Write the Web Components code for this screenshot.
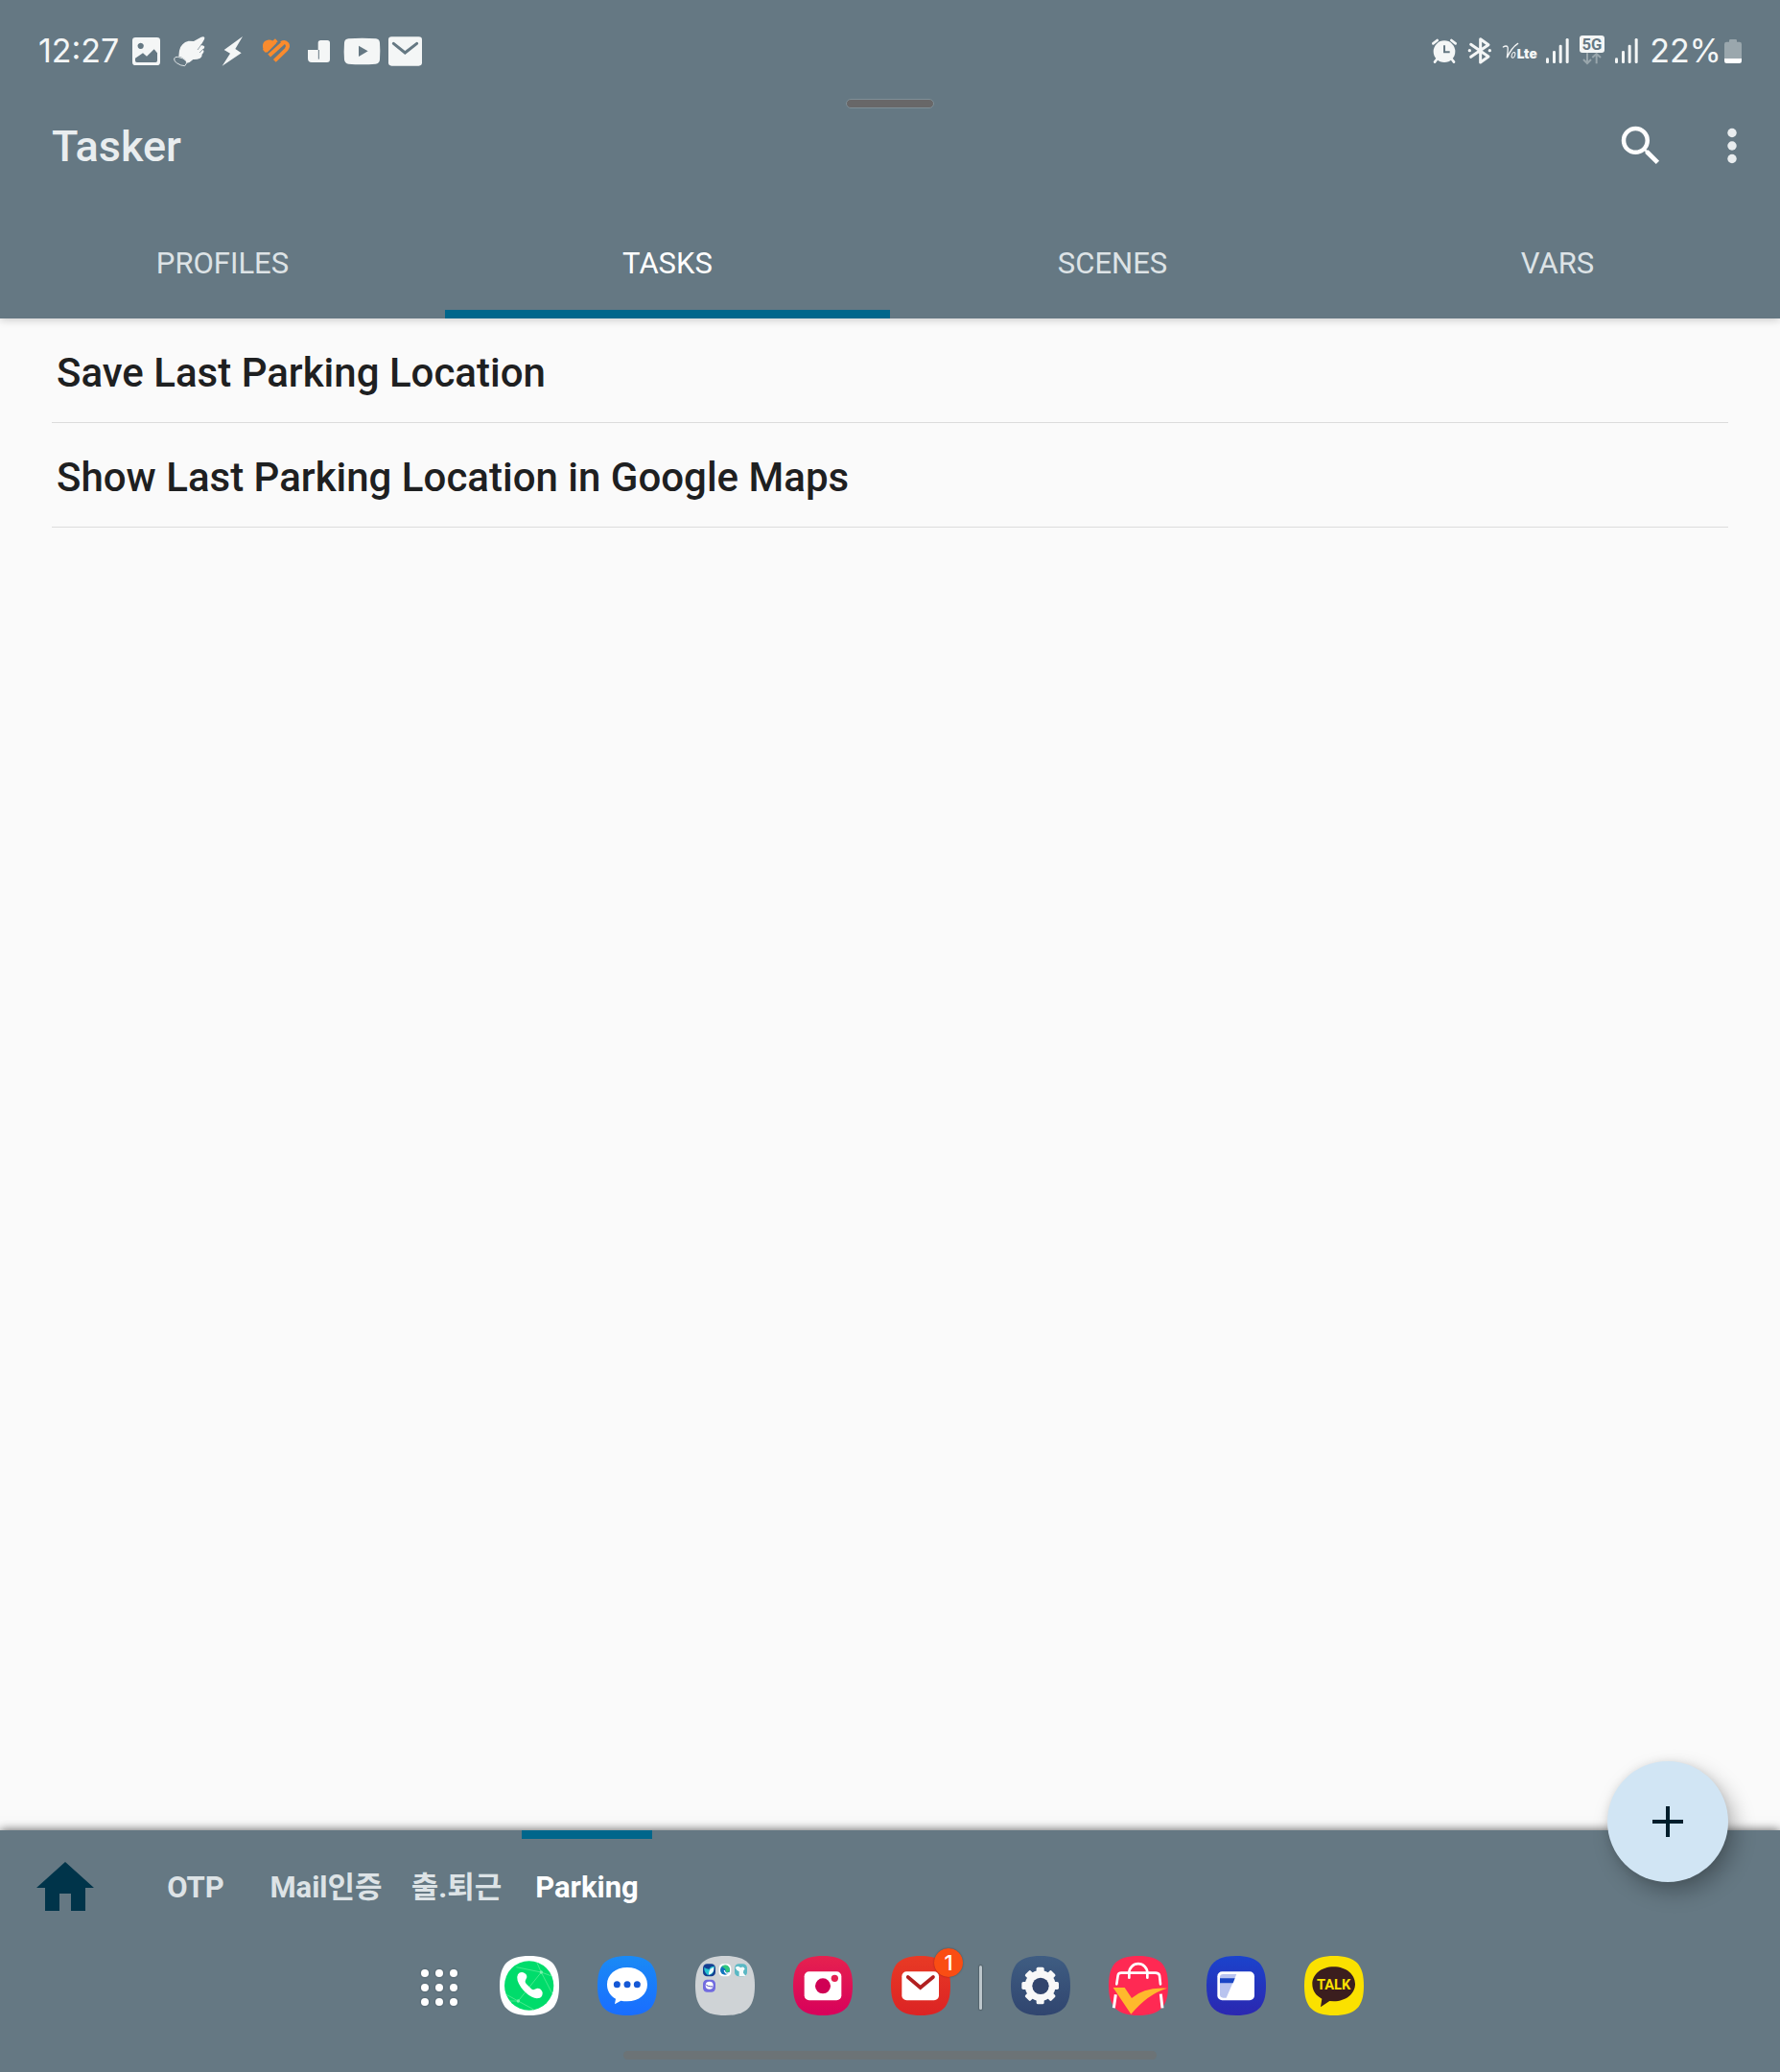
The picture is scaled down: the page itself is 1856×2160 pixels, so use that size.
<!DOCTYPE html>
<html lang="ko">
<head>
<meta charset="utf-8">
<title>Tasker</title>
<style>
html, body { margin: 0; height: 100%; }
body { font-family: Roboto, "Noto Sans CJK KR", sans-serif; background: #fafafa; color: #1e2021; }
</style>
</head>
<body>
<tasker-app></tasker-app>
<script>
const define = (name, html, setup) => customElements.define(name, class extends HTMLElement {
  connectedCallback() {
    if (this.shadowRoot) return;
    const t = document.createElement('template');
    t.innerHTML = html;
    this.attachShadow({ mode: 'open' }).append(t.content.cloneNode(true));
    if (setup) setup(this, this.shadowRoot);
  }
});

const RESET = `button{font:inherit;color:inherit;background:none;border:0;margin:0;padding:0;cursor:pointer}svg{display:block}*{box-sizing:border-box}`;

/* Status bar glyphs: [viewBox x, width, drawing], three units to a pixel */
const NOTICES = {
  image: [330, 135, `<path fill-rule="evenodd" fill="#f4f6f6" d="M364 57h67q10 0 10 10v67q0 10-10 10h-67q-10 0-10-10V67q0-10 10-10zM380 74a9.500 9.500 0 1 0 .1 0zM363 122v8q0 5 5 5h59q5 0 5-5v-24l-10-12-23 22-12-10z"/>`],
  finger: [465, 135, `<path fill="#f4f6f6" d="M499 116 501 98Q502 88 511 79 518 70 530 68L546 69 569 56Q578 52 580 58 581 63 574 72L568 82Q577 80 580 86 580 91 574 96 580 99 576 105L572 110Q573 118 566 122 556 127 544 126 534 136 525 137 519 120 499 116z"/><path fill="none" stroke="#f4f6f6" stroke-width="2.500" d="M496 118q-9-1-11 5-2 8 8 14 12 9 25 9 6-6 6-14-9-11-28-14z"/><path stroke="#657883" stroke-width="2" fill="none" d="M571 78 558 96M577 92l-13 13"/>`],
  bolt: [600, 135, `<path fill="#f4f6f6" d="M699 54 641 96 660 107 635 146 695 106 676 93z"/>`],
  heart: [735, 135, `<g fill="none" stroke="#fa8b2d" stroke-width="12"><path d="M782 114 826 74"/><path d="M766 100 805 65"/><path d="M799 130 836 94Q843 85 838 77 831 68 820 75"/></g><path fill="#fa8b2d" d="M764 96Q758 79 768 69 780 60 794 68L804 76 776 104 770 103z"/><path stroke="#657883" stroke-width="3" d="M771 110 808 77M789 124 824 92"/>`],
  jay: [870, 135, `<path fill="#f4f6f6" d="M903 96h32V74q0-8 8-8h21q8 0 8 8v52q0 9-9 9h-48q-12 0-12-12z"/><path stroke="#657883" stroke-width="3" d="M937 96v29"/>`],
  video: [1005, 135, `<path fill="#f4f6f6" d="M1030 61Q1073 57 1116 61 1127 62 1128 74 1130 100 1128 126 1127 139 1115 140 1072 143 1030 140 1019 139 1017 127 1015 100 1017 74 1018 62 1030 61z"/><path fill="#657883" d="M1062 83v34l29-17z"/>`],
  mail: [1140, 135, `<rect x="1155" y="55" width="105" height="91" rx="10" fill="#f4f6f6"/><path d="M1171 76 1207 105 1244 76" fill="none" stroke="#657883" stroke-width="9" stroke-linecap="round"/>`]
};
const bars = x => [[0, 121, 17], [21, 99, 39], [41, 80, 58], [62, 60, 78]].map(b => `<rect x="${x + b[0]}" y="${b[1]}" width="9" height="${b[2]}" rx="4" fill="#f4f6f6"/>`).join('');
const SYSTEM = {
  alarm: [48, 114, `<g fill="none" stroke="#f4f6f6" stroke-width="8" stroke-linecap="round"><path d="M73 76 86 66M143 76 130 66M84 126 78 134M132 126 138 134"/></g><circle cx="108" cy="101" r="34" fill="#f4f6f6"/><path d="M108 82v21h17" fill="none" stroke="#657883" stroke-width="6"/>`],
  bluetooth: [162, 114, `<g fill="none" stroke="#f4f6f6" stroke-width="9" stroke-linejoin="round" stroke-linecap="round"><path d="M191 79 246 117 221 135V62L246 80 191 118"/></g><circle cx="187" cy="98" r="5" fill="#f4f6f6"/><circle cx="250" cy="98" r="5" fill="#f4f6f6"/>`],
  volte: [276, 138, `<path fill="none" stroke="#f4f6f6" stroke-width="4" stroke-linecap="round" d="M292 87q10-6 14 0 2 4-2 34 14-32 34-45"/><ellipse cx="324" cy="112" rx="5" ry="9" transform="rotate(18 324 112)" fill="none" stroke="#f4f6f6" stroke-width="3"/><text x="335" y="123" font-family="Inter,sans-serif" font-size="41" font-weight="900" fill="#f4f6f6">Lte</text>`],
  signal1: [414, 99, bars(426)],
  fiveg: [513, 111, `<rect x="531" y="51" width="78" height="54" rx="9" fill="#f4f6f6"/><text x="570" y="96" text-anchor="middle" font-family="Roboto,sans-serif" font-size="50" font-weight="700" fill="#657883">5G</text><path d="M555 106v31M543 126l12 12 12-12M584 139v-31M571 120l13-12 13 12" fill="none" stroke="#99a6ac" stroke-width="6"/>`],
  signal2: [624, 111, bars(642)],
  battery: [975, 75, `<path fill="#9aa7ad" d="M999 67q0-4 4-4h16q4 0 4 4v4h8q7 0 7 7v46h-54V78q0-7 7-7h8z"/><path fill="#fff" d="M984 123h54v8q0 7-7 7h-40q-7 0-7-7z"/>`]
};
define('status-icon', `<style>:host{display:block;flex:none}svg{display:block}</style>`, (el, root) => {
  const [x, w, art] = NOTICES[el.getAttribute('name')] || SYSTEM[el.getAttribute('name')];
  root.append(document.createRange().createContextualFragment(
    `<svg width="${w / 3}" height="34" viewBox="${x} 48 ${w} 102" aria-hidden="true">${art}</svg>`));
});

define('status-bar', `<style>${RESET}
:host{display:flex;justify-content:space-between;align-items:center;height:88px;padding:18px 36px 0 40px;box-sizing:border-box;font:400 34px/36px Inter,sans-serif;color:#f4f6f6}
div{display:flex;align-items:center}
.clock{width:90px}
.level{padding-left:5px}
</style>
<div><span class="clock">12:27</span>${Object.keys(NOTICES).map(n => `<status-icon name="${n}"></status-icon>`).join('')}</div>
<div>${Object.keys(SYSTEM).slice(0, -1).map(n => `<status-icon name="${n}"></status-icon>`).join('')}<span class="level">22%</span><status-icon name="battery"></status-icon></div>`);

define('app-toolbar', `<style>${RESET}
:host{display:flex;align-items:center;justify-content:space-between;height:127px;padding:0 23px 0 54px;box-sizing:border-box}
h1{margin:0;padding-top:3px;font-size:45px;line-height:54px;font-weight:500;color:#e9edef}
div{display:flex;gap:41px}
</style>
<h1><slot></slot></h1>
<div>
<button aria-label="Search"><svg width="54" height="54" viewBox="0 0 24 24"><path fill="#fff" d="M15.500 14h-.79l-.28-.27A6.471 6.471 0 0 0 16 9.500 6.500 6.500 0 1 0 9.500 16c1.610 0 3.090-.59 4.230-1.570l.27.28v.79l5 4.990L20.490 19l-4.990-5zm-6 0C7.010 14 5 11.990 5 9.500S7.010 5 9.500 5 14 7.010 14 9.500 11.990 14 9.500 14z"/></svg></button>
<button aria-label="More options"><svg width="54" height="54" viewBox="0 0 24 24" fill="#e9edef"><circle cx="12" cy="6" r="2.100"/><circle cx="12" cy="12" r="2.100"/><circle cx="12" cy="18" r="2.100"/></svg></button>
</div>`);

define('section-tab', `<style>${RESET}
:host{display:flex;flex:1}
button{flex:1;height:117px;font-size:31px;line-height:36px;color:#dde3e6;border-bottom:9px solid transparent;padding-top:11px}
:host([selected]) button{color:#fff;border-color:#00668b}
</style><button role="tab"><slot></slot></button>`);

define('app-header', `<style>
:host{display:block;position:relative;background:#657883;box-shadow:0 2px 8px rgba(0,0,0,.18)}
.grip{position:absolute;top:103px;left:50%;margin-left:-46px;width:92px;height:10px;box-sizing:border-box;border:1px solid #7f8f97;border-radius:5px;background:#686768}
nav{display:flex}
</style>
<status-bar></status-bar><i class="grip"></i>
<app-toolbar>Tasker</app-toolbar>
<nav role="tablist"><section-tab>PROFILES</section-tab><section-tab selected>TASKS</section-tab><section-tab>SCENES</section-tab><section-tab>VARS</section-tab></nav>`);

define('task-row', `<style>${RESET}
:host{display:block;border-bottom:1px solid #dcdcdc}
button{display:block;width:100%;height:108px;padding:5px 5px 0;text-align:left;font-size:42px;line-height:50px;font-weight:500}
</style><button><slot></slot></button>`);

define('project-tab', `<style>${RESET}
:host{display:block}
button{display:block;width:136px;height:118px;padding:0 0 7px;border-top:9px solid transparent;font-size:31px;line-height:38px;font-weight:700;color:#dde3e6;white-space:nowrap}
:host([selected]) button{color:#fff;border-color:#00668b}
</style><button><slot></slot></button>`);

define('project-bar', `<style>${RESET}
:host{display:flex;position:relative}
.home{width:136px;padding-left:38px}
.fab{position:absolute;right:54px;top:-72px;width:126px;height:126px;border-radius:50%;background:#d1e5f4;display:grid;place-items:center;box-shadow:7px 10px 22px rgba(0,0,0,.28),0 0 8px rgba(0,0,0,.08)}
</style>
<button class="home" aria-label="Home"><svg width="60" height="52" viewBox="0 0 60 52"><path fill="#00344a" d="M30 0 60 27H51V51H36V33H24V51H9V27H0z"/></svg></button>
<project-tab>OTP</project-tab><project-tab>Mail인증</project-tab><project-tab>출.퇴근</project-tab><project-tab selected>Parking</project-tab>
<button class="fab" aria-label="Add task"><svg width="32" height="32" viewBox="0 0 32 32"><path stroke="#001e2c" stroke-width="4" d="M16 0v32M0 16h32"/></svg></button>`);

/* Launcher icons: [viewBox origin x, y, squircle fill, drawing] */
const bag = `<g fill="none" stroke="#fff" stroke-width="8" stroke-linecap="round"><path d="M463 147 467 120Q468 112 478 112H584Q595 112 597 120L600 147"/><path d="M502 127V112A28 28 0 0 1 559 112V127"/></g><path d="M460 180 454 222M601 178 606 222" stroke="#fff" stroke-width="9"/><path fill="#ffb92c" d="M452 158H488L510 191Q550 155 621 160 560 178 508 241z"/>`;
const APPS = {
  phone: [303, 59, '#fff', `<circle cx="395" cy="152" r="77" fill="#00dc6b"/><path d="M324 180 361 200 433 110 468 178M355 94 433 110 466 122M433 110 419 79M361 200 410 227M361 200 335 200" fill="none" stroke="#6bef9f" stroke-width="2"/><circle cx="433" cy="110" r="5" fill="#7af0ad"/><circle cx="361" cy="200" r="5" fill="#7af0ad"/><path fill="#fff" d="M360 117Q366 108 377 111 389 116 388 126L383 137Q382 141 386 146L402 162Q406 166 411 164L421 160Q433 160 437 173 438 185 429 190 409 196 388 177 366 157 359 136 356 124 360 117z"/>`],
  messages: [609, 59, 'url(#g)', `<path fill="#fff" d="M702 95C739 95 765 118 765 148S739 201 702 201Q691 201 682 199L663 210 666 193C648 183 639 168 639 148 639 118 665 95 702 95z"/><g fill="#1558d6"><circle cx="670" cy="148" r="10.500"/><circle cx="702" cy="148" r="10.500"/><circle cx="733" cy="148" r="10.500"/></g>`, '#1a8af5', '#196dff'],
  folder: [75, 59, '#cfd3d6', `<rect x="99" y="84" width="39" height="39" rx="13" fill="#143f91"/><path fill="#27c3d1" d="M103 95q8 6 16 5 2-9 16-9-3 9-3 16-5 14-19 11-12-10-10-23z"/><path fill="#e9fbfa" d="M117 112q3-16 16-17 2 17-16 23z"/><rect x="149" y="84" width="38" height="39" rx="13" fill="#fff"/><circle cx="168" cy="103" r="15" fill="#1173bd"/><path fill="#31c77c" d="M157 92q20-12 26 9 0 10-12 9 2-10-14-18z"/><path stroke="#fff" stroke-width="4" fill="none" d="M181 112q-13 5-15-8"/><rect x="198" y="84" width="39" height="39" rx="13" fill="#5ab8c4"/><path fill="#f4fbfb" d="M200 96q7-10 17 0 9-6 13 4-6 3-5 12l8 10h-21v-14q-9-4-12-12z"/><rect x="99" y="133" width="39" height="39" rx="13" fill="#716be0"/><circle cx="119" cy="151" r="12" fill="#fff"/><path d="M108 148q4 7 22 7" stroke="#5148b5" stroke-width="3" fill="none"/>`],
  camera: [381, 59, 'url(#g)', `<rect x="416" y="108" width="116" height="90" rx="15" fill="#fff"/><circle cx="474" cy="153" r="24" fill="#d00054"/><circle cx="511" cy="129" r="11" fill="#e32051"/>`, '#e6214f', '#d8005b'],
  mail: [687, 59, 'url(#g)', `<rect x="721" y="108" width="116" height="90" rx="15" fill="#fff"/><path d="M740 125 779 158 819 125" fill="none" stroke="#b11f20" stroke-width="11" stroke-linecap="round"/>`, '#e83a25', '#dc2324'],
  settings: [132, 59, 'url(#g)', `<g fill="#f8f8f8"><circle cx="224" cy="152" r="48"/><rect x="212" y="94" width="24" height="116" rx="5"/><rect x="212" y="94" width="24" height="116" rx="5" transform="rotate(45 224 152)"/><rect x="212" y="94" width="24" height="116" rx="5" transform="rotate(90 224 152)"/><rect x="212" y="94" width="24" height="116" rx="5" transform="rotate(135 224 152)"/></g><circle cx="225" cy="153" r="26" fill="#32456d"/>`, '#3f5d82', '#30456f'],
  shop: [438, 59, '#ff2953', bag],
  wallet: [744, 59, 'url(#g)', `<rect x="778" y="108" width="116" height="90" rx="15" fill="#fff"/><path fill="#b9c4ef" d="M796 116H838L806 190H796Q786 190 786 180V126Q786 116 796 116z"/><path fill="#1a45c5" d="M786 129H833L827 144H786z"/>`, '#1b43cc', '#2b27b0'],
  talk: [1050, 59, '#fbe100', `<path fill="#3b1e1e" d="M1142 93C1181 93 1209 117 1209 147S1181 201 1142 201L1129 200 1101 219 1105 193C1086 184 1075 167 1075 147 1075 117 1103 93 1142 93z"/><text x="1142" y="164" text-anchor="middle" font-family="Roboto,sans-serif" font-size="44" font-weight="700" fill="#fbe100">TALK</text>`]
};
define('dock-app', `<style>${RESET}
:host{display:block;position:relative;flex:none}
svg{overflow:visible}
.badge{position:absolute;left:45px;top:-8px;width:30px;height:30px;border-radius:50%;background:#fa4d13;color:#fff;font:500 22px/30px Inter,sans-serif;text-align:center;box-shadow:0 0 2px rgba(0,0,0,.35)}
</style>`, (el, root) => {
  const [x, y, fill, art, c1, c2] = APPS[el.getAttribute('name')];
  const count = el.getAttribute('count');
  root.append(document.createRange().createContextualFragment(
    `<button aria-label="${el.getAttribute('name')}"><svg width="62" height="62" viewBox="${x} ${y} 186 186"><defs><linearGradient id="g" x2="0" y2="1"><stop stop-color="${c1 || fill}"/><stop offset="1" stop-color="${c2 || fill}"/></linearGradient></defs><path transform="translate(${x} ${y})" fill="${fill}" d="M93 0C160 0 186 26 186 93S160 186 93 186 0 160 0 93 26 0 93 0z"/>${art}</svg></button>${count ? `<span class="badge">${count}</span>` : ''}`));
});

define('app-dock', `<style>${RESET}
:host{display:flex;justify-content:center;align-items:center;gap:30px;height:92px}
div{display:flex;align-items:center;gap:40px}
.line{width:3px;height:46px;border-radius:2px;background:#bcc6cb;box-shadow:0 0 1px 1px rgba(0,0,0,.18)}
</style>
<div><button aria-label="Apps"><svg width="47" height="47" viewBox="0 0 47 47">${[8, 23, 38].map(y => [9, 24, 39].map(x => `<circle cx="${x}" cy="${y}" r="5.500" fill="#5d6f7a"/><circle cx="${x}" cy="${y}" r="4" fill="#fff"/>`).join('')).join('')}</svg></button>
<dock-app name="phone"></dock-app><dock-app name="messages"></dock-app><dock-app name="folder"></dock-app><dock-app name="camera"></dock-app><dock-app name="mail" count="1"></dock-app></div>
<i class="line"></i>
<div><dock-app name="settings"></dock-app><dock-app name="shop"></dock-app><dock-app name="wallet"></dock-app><dock-app name="talk"></dock-app></div>`);

define('app-footer', `<style>
:host{display:flex;flex-direction:column;background:#657883;box-shadow:0 0 10px rgba(0,0,0,.65);padding-bottom:13px}
.pill{width:556px;height:9px;margin:20px auto 0;border-radius:5px;background:#6c7376}
</style><project-bar></project-bar><app-dock></app-dock><i class="pill"></i>`);

define('tasker-app', `<style>
:host{display:flex;flex-direction:column;min-height:100vh;background:#fafafa}
main{flex:1;padding:0 54px}
</style>
<app-header></app-header>
<main><task-row>Save Last Parking Location</task-row><task-row>Show Last Parking Location in Google Maps</task-row></main>
<app-footer></app-footer>`);
</script>
</body>
</html>
